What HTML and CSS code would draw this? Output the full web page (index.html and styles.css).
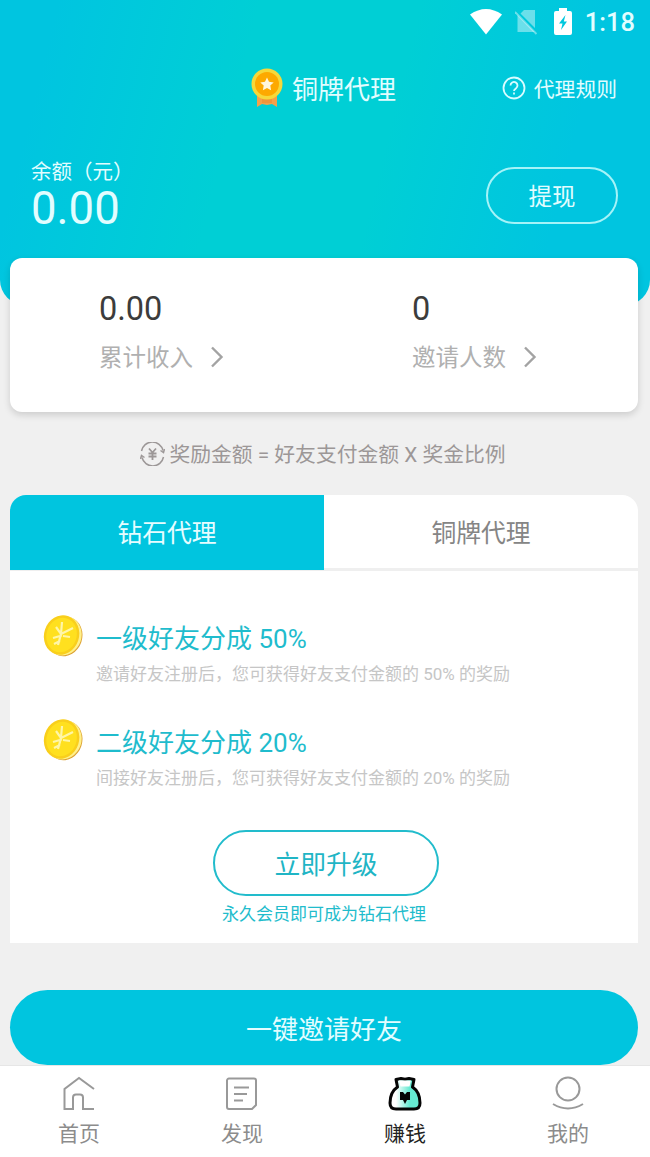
FILE: index.html
```html
<!DOCTYPE html>
<html lang="zh-CN">
<head>
<meta charset="utf-8">
<title>赚钱</title>
<link rel="stylesheet" href="styles.css">
</head>
<body>
<div class="app">
  <header class="hero">
    <div class="status">
      <svg class="wifi" width="32" height="26" viewBox="0 0 32 26"><path d="M0 5.500Q16-5.500 32 5.500L16 25.500Z" fill="#fff"/></svg>
      <svg class="sim" width="23" height="26" viewBox="0 0 23 26"><path d="M9 1H20V19L5.500 4.500Z M2.500 6L19 22.500V23H2.500Z" fill="#fff" opacity=".42"/><path d="M0 3L21.500 25" stroke="#fff" stroke-width="1.800" opacity=".42"/></svg>
      <svg class="battery" width="18" height="27" viewBox="0 0 18 27"><path fill="#fff" fill-rule="evenodd" d="M5 0h8v3h3a2 2 0 0 1 2 2v20a2 2 0 0 1-2 2H2a2 2 0 0 1-2-2V5a2 2 0 0 1 2-2h3zM11.500 7L5 15.500h3.500L7 22l6-8.500H9.800z"/></svg>
      <span class="clock">1:18</span>
    </div>
    <div class="titlebar">
      <div class="title">
        <svg width="32" height="40" viewBox="0 0 32 40"><path d="M6 25h20v14l-5-3-5 1-5-1-5 3z" fill="#f5a04a"/><path d="M11 28h10v7H11z" fill="#f0943c"/><circle cx="16" cy="16" r="15.500" fill="#f6d83a"/><circle cx="16" cy="16" r="12" fill="#fda900"/><path d="M16 9.500l2 4.300 4.700.6-3.400 3.200.8 4.600-4.100-2.200-4.100 2.200.8-4.600-3.400-3.200 4.700-.6z" fill="#fff6dc"/></svg>
        <span>铜牌代理</span>
      </div>
      <div class="rules">
        <svg width="24" height="24" viewBox="0 0 24 24" fill="none" stroke="#d9fcff" stroke-width="1.800"><circle cx="12" cy="12" r="10.500"/><path d="M8.500 9.500a3.500 3.500 0 1 1 5.400 2.900C12.500 13.300 12 13.700 12 15"/><path d="M12 16.500v2"/></svg>
        <span>代理规则</span>
      </div>
    </div>
    <div class="balance">
      <div>
        <div class="balance-label">余额（元）</div>
        <div class="balance-value">0.00</div>
      </div>
      <div class="withdraw">提现</div>
    </div>
  </header>

  <section class="stats">
    <div class="stat">
      <div class="stat-value">0.00</div>
      <div class="stat-label"><span>累计收入</span><svg width="14" height="22" viewBox="0 0 14 22"><path d="M2 1.500L11.500 11 2 20.500" fill="none" stroke="#a3a3a3" stroke-width="2.400"/></svg></div>
    </div>
    <div class="stat">
      <div class="stat-value">0</div>
      <div class="stat-label"><span>邀请人数</span><svg width="14" height="22" viewBox="0 0 14 22"><path d="M2 1.500L11.500 11 2 20.500" fill="none" stroke="#a3a3a3" stroke-width="2.400"/></svg></div>
    </div>
  </section>

  <div class="formula">
    <svg width="25" height="24" viewBox="0 0 25 24" fill="none" stroke="#9c9797" stroke-width="1.500"><path d="M1.500 9A11 11 0 0 1 23 8.500M23.500 15A11 11 0 0 1 2 15.500"/><path d="M20.500 8.500l3 2 1-3.500M4.500 15.500l-3-2L.5 17"/><path d="M9 6.500l3.500 4 3.500-4M12.500 10.500V18M8.500 11.500h8M8.500 14.500h8" stroke-width="1.800"/></svg>
    <span>奖励金额 = 好友支付金额 X 奖金比例</span>
  </div>

  <section class="plans">
    <div class="tabs">
      <div class="tab tab-active">钻石代理</div>
      <div class="tab">铜牌代理</div>
    </div>
    <div class="plan-body">
      <div class="benefit">
        <svg class="coin" width="40" height="43" viewBox="0 0 40 43"><g transform="rotate(18 20 21.500)"><ellipse cx="22" cy="22" rx="17.500" ry="20" fill="#dda233"/><ellipse cx="20.500" cy="21.500" rx="18" ry="20" fill="#fff08a"/><ellipse cx="18.500" cy="21.500" rx="17.500" ry="20" fill="#f9cf1c"/><ellipse cx="18.500" cy="21.500" rx="15" ry="17.500" fill="#ffe01f"/></g><path d="M13 13l5 7 1-12M18 20l12-6M18 20l-3 11M10 24l7-2M20 22l7 1M11 30l6-3" fill="none" stroke="#fff6a8" stroke-width="2.200"/></svg>
        <div>
          <div class="benefit-title">一级好友分成 50%</div>
          <div class="benefit-note">邀请好友注册后，您可获得好友支付金额的 50% 的奖励</div>
        </div>
      </div>
      <div class="benefit">
        <svg class="coin" width="40" height="43" viewBox="0 0 40 43"><g transform="rotate(18 20 21.500)"><ellipse cx="22" cy="22" rx="17.500" ry="20" fill="#dda233"/><ellipse cx="20.500" cy="21.500" rx="18" ry="20" fill="#fff08a"/><ellipse cx="18.500" cy="21.500" rx="17.500" ry="20" fill="#f9cf1c"/><ellipse cx="18.500" cy="21.500" rx="15" ry="17.500" fill="#ffe01f"/></g><path d="M13 13l5 7 1-12M18 20l12-6M18 20l-3 11M10 24l7-2M20 22l7 1M11 30l6-3" fill="none" stroke="#fff6a8" stroke-width="2.200"/></svg>
        <div>
          <div class="benefit-title">二级好友分成 20%</div>
          <div class="benefit-note">间接好友注册后，您可获得好友支付金额的 20% 的奖励</div>
        </div>
      </div>
      <div class="upgrade">立即升级</div>
      <div class="upgrade-note">永久会员即可成为钻石代理</div>
    </div>
  </section>

  <div class="invite">一键邀请好友</div>

  <nav class="nav">
    <div class="nav-item">
      <svg width="34" height="36" viewBox="0 0 34 36" fill="none" stroke="#999" stroke-width="2"><path d="M32 13L17 2 2.500 13V33H11V21.500a3 3 0 0 1 3-3h4a3 3 0 0 1 3 3V33H32"/></svg>
      <span>首页</span>
    </div>
    <div class="nav-item">
      <svg width="34" height="36" viewBox="0 0 34 36" fill="none" stroke="#999" stroke-width="2"><path d="M4 2.500H29a2 2 0 0 1 2 2V29l-4 4H4a2 2 0 0 1-2-2V4.500a2 2 0 0 1 2-2zM9 11.500H24M9 18H22M9 24.500H18"/></svg>
      <span>发现</span>
    </div>
    <div class="nav-item nav-active">
      <svg width="34" height="36" viewBox="0 0 34 36"><defs><linearGradient id="bag"><stop offset=".2" stop-color="#fff"/><stop offset=".65" stop-color="#66ead2"/></linearGradient></defs><path d="M8 3.500l5-1 4 .7 4-.7 5 1-1.500 7.500C29 14 32 20 32 27q0 6-6 6H8q-6 0-6-6C2 20 5 14 9.500 11z" fill="url(#bag)" stroke="#050505" stroke-width="3" stroke-linejoin="round"/><path d="M11 4.500h12l-1.500 6h-9z" fill="#fff"/><path d="M12 16h3l2 2.500 2-2.500h3v8h-3l-2 4-2-4h-3z" fill="#050505"/></svg>
      <span>赚钱</span>
    </div>
    <div class="nav-item">
      <svg width="34" height="36" viewBox="0 0 34 36" fill="none" stroke="#999" stroke-width="2"><circle cx="17" cy="13" r="11.500"/><path d="M2 28Q17 37 32 28"/></svg>
      <span>我的</span>
    </div>
  </nav>
</div>
</body>
</html>
```
FILE: styles.css
```css
* { box-sizing: border-box; }
body {
  margin: 0;
  background: #f0f0f0;
  font-family: Roboto, "Noto Sans CJK SC", sans-serif;
}
svg { display: block; flex: none; }
.app {
  width: 650px;
  height: 1157px;
  display: flex;
  flex-direction: column;
  overflow: hidden;
  white-space: nowrap;
}
.hero {
  flex: none;
  height: 305px;
  border-radius: 0 0 25px 25px;
  background: linear-gradient(104deg, #00c5e0 8%, #00cfd5 36%, #00cfd5 58%, #00c5e0 84%);
  color: #e2fdff;
}
.status {
  height: 44px;
  padding: 0 15px 1px 0;
  display: flex;
  justify-content: flex-end;
  align-items: center;
}
.sim { margin-left: 13px; }
.battery { margin-left: 16px; }
.clock {
  margin-left: 13px;
  font-size: 25.5px;
  font-weight: 500;
  line-height: 30px;
}
.titlebar {
  height: 88px;
  padding: 0 33px 0 251px;
  display: flex;
  justify-content: space-between;
  align-items: center;
}
.title {
  display: flex;
  align-items: center;
  gap: 9px;
  font-size: 26px;
  line-height: 40px;
}
.title span { padding-top: 4px; }
.rules {
  display: flex;
  align-items: center;
  gap: 8px;
  font-size: 20.800px;
  line-height: 30px;
}
.rules span { padding-top: 3px; }
.balance {
  padding: 23px 32px 0 31px;
  display: flex;
  justify-content: space-between;
}
.balance-label {
  padding-top: 2px;
  font-size: 20.500px;
  line-height: 30px;
}
.balance-value {
  margin-top: -3px;
  font-size: 45.500px;
  line-height: 50px;
}
.withdraw {
  margin-top: 12px;
  width: 132px;
  height: 57px;
  border: 2px solid #a5f3f8;
  border-radius: 29px;
  font-size: 23.500px;
  line-height: 56px;
  text-align: center;
}
.stats {
  flex: none;
  margin: -47px 12px 0 10px;
  height: 154px;
  padding: 30px 0 0;
  border-radius: 12px;
  background: #fff;
  box-shadow: 0 3px 7px rgba(0, 0, 0, .15);
  display: grid;
  grid-template-columns: 313px 1fr;
}
.stat { padding-left: 89px; }
.stat-value {
  font-size: 32.500px;
  line-height: 42px;
  color: #3c3c3c;
}
.stat-label {
  margin-top: 10px;
  display: flex;
  align-items: center;
  gap: 17px;
  font-size: 23.500px;
  line-height: 34px;
  color: #b0b0b0;
}
.stat-label span { line-height: 36px; margin-bottom: -2px; }
.formula {
  flex: none;
  height: 83px;
  padding-right: 4px;
  display: flex;
  justify-content: center;
  align-items: center;
  gap: 4px;
  font-size: 20.800px;
  line-height: 30px;
  color: #9c9797;
}
.formula span { padding-top: 2px; }
.plans {
  flex: none;
  height: 448px;
  margin: 0 12px 0 10px;
  border-radius: 16px 16px 0 0;
  overflow: hidden;
  background: #fff;
}
.tabs {
  display: grid;
  grid-template-columns: 1fr 1fr;
  height: 76px;
  border-bottom: 3px solid #efefef;
}
.tab {
  font-size: 24.800px;
  line-height: 77px;
  text-align: center;
  color: #858585;
}
.tab-active {
  height: 75px;
  background: #00c5df;
  color: #e6fdff;
}
.plan-body { padding: 43px 33px 0; }
.benefit {
  display: flex;
  gap: 13px;
  height: 104px;
}
.benefit-title {
  padding-top: 6px;
  font-size: 26px;
  line-height: 38px;
  color: #1fbccd;
}
.benefit-note {
  margin-top: 3px;
  font-size: 17px;
  line-height: 27px;
  color: #c6c6c6;
}
.upgrade {
  position: relative;
  width: 226px;
  height: 66px;
  margin: 8px 0 0 170px;
  border: 2px solid #22bccc;
  border-radius: 33px;
  font-size: 25.800px;
  line-height: 66px;
  text-align: center;
  color: #1fb5c5;
}
.upgrade-note {
  margin-top: 5px;
  font-size: 17px;
  line-height: 26px;
  text-align: center;
  color: #22bccc;
}
.invite {
  flex: none;
  height: 75px;
  margin: 47px 12px 0 10px;
  border-radius: 38px;
  background: #00c5df;
  font-size: 26px;
  line-height: 81px;
  text-align: center;
  color: #e2fdff;
}
.nav {
  flex: 1;
  background: #fff;
  border-top: 1px solid #e6e6e6;
  display: grid;
  grid-template-columns: repeat(4, 163px);
  justify-content: center;
}
.nav-item {
  padding-top: 10px;
  padding-right: 3px;
  display: flex;
  flex-direction: column;
  align-items: center;
  gap: 7px;
  font-size: 21px;
  line-height: 30px;
  color: #8c8c8c;
}
.nav-active { color: #222; }
```
